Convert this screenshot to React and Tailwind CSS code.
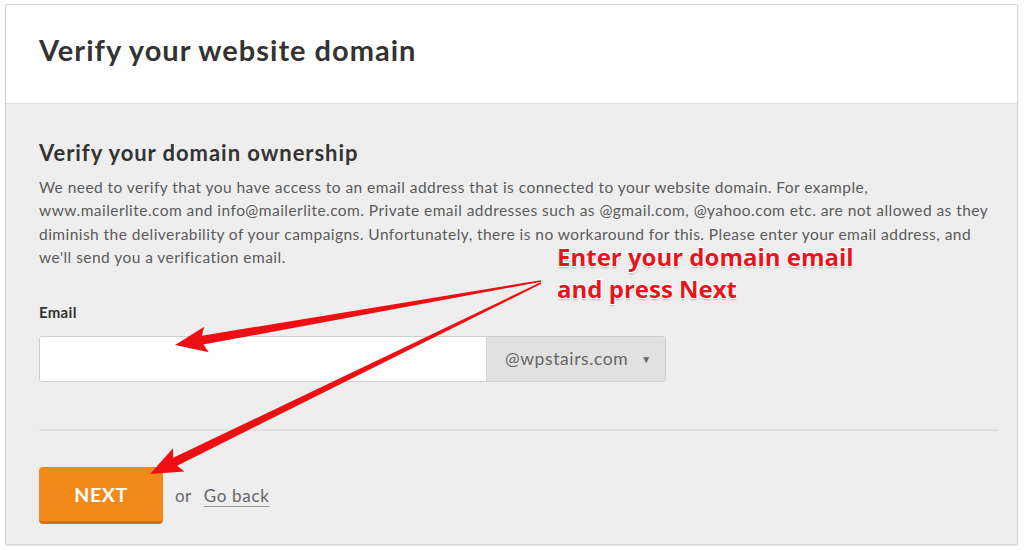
import React from "react";

// tapered arrow polygon from tail to tip
function arrowPoints(tail, tip, headLen = 28, headHalf = 13, shaftTip = 4.5, shaftTail = 0.8) {
  const dx = tip[0] - tail[0];
  const dy = tip[1] - tail[1];
  const len = Math.hypot(dx, dy);
  const ux = dx / len;
  const uy = dy / len;
  const nx = -uy;
  const ny = ux;
  const bx = tip[0] - ux * headLen;
  const by = tip[1] - uy * headLen;
  const pts = [
    [tail[0] + nx * shaftTail, tail[1] + ny * shaftTail],
    [bx + nx * shaftTip, by + ny * shaftTip],
    [bx - ux * 4 + nx * headHalf, by - uy * 4 + ny * headHalf],
    tip,
    [bx - ux * 4 - nx * headHalf, by - uy * 4 - ny * headHalf],
    [bx - nx * shaftTip, by - ny * shaftTip],
    [tail[0] - nx * shaftTail, tail[1] - ny * shaftTail],
  ];
  return pts.map((p) => `${p[0].toFixed(1)},${p[1].toFixed(1)}`).join(" ");
}

function Arrows() {
  return (
    <svg className="pointer-events-none absolute left-0 top-0" width="1024" height="550" viewBox="0 0 1024 550">
      <polygon points={arrowPoints([541, 281], [175, 345])} fill="#ee0f14" />
      <polygon points={arrowPoints([541, 283], [150, 474])} fill="#ee0f14" />
    </svg>
  );
}

export default function App() {
  const font = { fontFamily: "Lato, 'Open Sans', sans-serif" };
  return (
    <div className="relative h-[550px] w-[1024px] overflow-hidden bg-white" style={font}>
      <div className="ml-[5px] mt-[4px] w-[1013px] h-[541px] border border-[#d6d6d6] rounded-[2px] shadow-[0_1px_2px_rgba(0,0,0,0.12)] overflow-hidden flex flex-col">
        <div className="h-[99px] bg-white border-b border-[#dedede] pl-[33px] pt-[26px]">
          <h1 className="text-[29px] font-bold text-[#333] leading-[38px] tracking-[1px]">Verify your website domain</h1>
        </div>

        <div className="flex-1 bg-[#eeeeee] pl-[33px] pr-[19px] pt-[35px]">
          <h2 className="text-[22px] font-bold text-[#333] leading-[28px] tracking-[0.95px]">Verify your domain ownership</h2>
          <p className="mt-[9px] text-[15.5px] leading-[23.3px] text-[#5b5b5b] tracking-[0.45px]">
            We need to verify that you have access to an email address that is connected to your website domain. For example,
            <br />
            www.mailerlite.com and info@mailerlite.com. Private email addresses such as @gmail.com, @yahoo.com etc. are not allowed as they
            <br />
            diminish the deliverability of your campaigns. Unfortunately, there is no workaround for this. Please enter your email address, and
            <br />
            we'll send you a verification email.
          </p>

          <label className="block mt-[33px] text-[15px] font-bold text-[#333] leading-[20px] tracking-[0.3px]">Email</label>
          <div className="mt-[14px] flex w-[627px] h-[46px] rounded-[3px] border border-[#cfcfcf] shadow-[inset_0_1px_2px_rgba(0,0,0,0.08)] overflow-hidden">
            <div className="w-[446px] bg-white" />
            <div className="flex-1 bg-[#e1e1e1] border-l border-[#d4d4d4] flex items-center pl-[18px] text-[17.5px] text-[#666] tracking-[0.6px]">
              @wpstairs.com
              <span className="ml-[13px] text-[10px] text-[#666]">▼</span>
            </div>
          </div>

          <div className="mt-[47px] h-[2px] bg-[#e2e2e2]" />

          <div className="mt-[36px] flex items-center">
            <button className="w-[124px] h-[57px] rounded-[4px] bg-[#f28a1a] border-b-[3px] border-[#d77010] text-white text-[19.5px] font-bold tracking-[0.6px]">
              NEXT
            </button>
            <span className="ml-[12px] text-[17px] text-[#666] tracking-[0.4px]">or</span>
            <a className="ml-[12px] text-[17px] text-[#666] tracking-[0.7px] underline decoration-[#999] underline-offset-[4px]">Go back</a>
          </div>
        </div>
      </div>

      <Arrows />

      <div
        className="absolute left-[557px] top-[241px] text-[24px] font-bold leading-[32px] text-[#e8141c]"
        style={{
          fontFamily: "'Open Sans', sans-serif",
          textShadow: "1px 1px 0 #fff, -1px -1px 0 #fff, 1px -1px 0 #fff, -1px 1px 0 #fff, 0 2px 2px rgba(0,0,0,0.25)",
        }}
      >
        Enter your domain email
        <br />
        and press Next
      </div>
    </div>
  );
}
